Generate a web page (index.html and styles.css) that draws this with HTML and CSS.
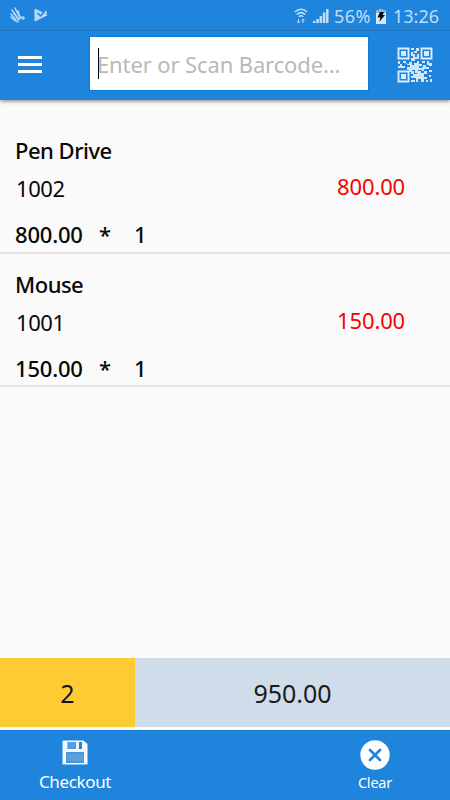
FILE: index.html
```html
<!DOCTYPE html>
<html lang="en">
<head>
<meta charset="utf-8">
<title>Checkout</title>
<link rel="stylesheet" href="styles.css">
</head>
<body>
<div class="app">
  <div class="status">
    <svg class="hand" width="16" height="17" viewBox="0 0 16 17" fill="none" stroke="#b6d8f5" stroke-width="1.5" stroke-linecap="round"><path d="M1 7l5 6M2 3l6 9M5 1l5 10M8 4l2 6M1 10l3 3 4 2" /><path d="M4 6l5 7M9 12l2-2"/><circle cx="13" cy="11" r="1" fill="#b6d8f5"/></svg>
    <svg class="play" width="14" height="14" viewBox="0 0 14 14"><path d="M1 1L13 7 1 13z" fill="#b6d8f5" stroke="#b6d8f5" stroke-linejoin="round"/><path d="M8 6.500L12.500 3.500" stroke="#b6d8f5" stroke-width="3"/><path d="M3.500 5l3 3L11 3" fill="none" stroke="#1e84dc" stroke-width="1.5"/></svg>
    <div class="right">
      <svg class="wifi" width="14" height="16" viewBox="0 0 14 16" fill="none" stroke="#c0ddf6" stroke-width="1.500"><path d="M.8 4Q7-1.500 13.200 4M2.700 6.500Q7 2.700 11.300 6.500M4.700 8.800Q7 6.800 9.300 8.800"/><path d="M4.500 11v4M3 13.500l1.500 1.500L6 13.500M9 15v-4M7.500 12.500L9 11l1.500 1.500" stroke-width="1"/></svg>
      <svg class="signal" width="16" height="16" viewBox="0 0 16 16" fill="#c0ddf6"><path d="M0 13h2.500v2H0zM3.300 11h2.500v4H3.300zM6.600 8h2.500v7H6.600zM9.900 4.500h2.500V15H9.900zM13 1h2.500v14H13z"/></svg>
      <span class="percent">56%</span>
      <svg class="battery" width="10" height="15" viewBox="0 0 10 15"><path d="M3 0h4v1.500h3V15H0V1.500h3z" fill="#d5e8f8"/><path d="M0 1.500h3V0h4v1.500h3V4H0z" fill="#83b9e7"/><path d="M4 3L8 3 6.500 6H9L3.300 13 4.500 8.500H1.500z" fill="#080b0d"/></svg>
      <span class="clock">13:26</span>
    </div>
  </div>
  <header class="toolbar">
    <div class="menu"><i></i><i></i><i></i></div>
    <div class="search"><span class="caret"></span><span class="hint">Enter or Scan Barcode...</span></div>
    <svg class="qr" width="36" height="36" viewBox="0 0 36 36">
      <g fill="none" stroke="#dbecfa" stroke-width="1.900"><path d="M1.500 1.500h10v10h-10zM24.500 1.500h10v10h-10zM1.500 24.500h10v10h-10z"/></g>
      <path fill="#dbecfa" d="M4 4h5v5H4zM27 4h5v5h-5zM4 27h5v5H4z"/>
      <path fill="#d1e6f8" d="M14 1h3v2h-3zM19 1h3v3h-2v2h-3V4h2zM14 5h2v2h2v3h2V7h2v5h-4v2h-4v-3h2V9h-2zM1 14h2v3h2v2h3v2H1v-2h2v-2H1zM6 14h3v3h3v-2h3v3h2v-2h3v-2h2v3h3v2h-3v2h3v2h-4v3h-3v-3h-3v2h-3v-2h-2v-3h3v-2h-3v-2H6zM25 14h3v2h-3zM30 14h2v2h3v3h-3v-1h-2zM26 18h3v2h3v2h-5v2h-2v-4h1zM32 23h3v2h-3zM14 24h3v3h3v2h-3v2h-3v-2h2v-2h-2zM21 24h3v2h3v-2h3v3h-3v3h3v2h-3v3h-3v-3h-3v3h-2v-4h-2v-2h3v-3h1zM14 33h4v2h-4zM32 28h2v2h-2zM29 33h2v2h-2zM33 32h2v3h-2z"/>
    </svg>
  </header>
  <main class="list">
    <section class="item">
      <div class="name">Pen Drive</div>
      <div class="line"><span class="code">1002</span><span class="amount">800.00</span></div>
      <div class="qty"><span class="price">800.00</span><span class="times">*</span><span>1</span></div>
    </section>
    <section class="item">
      <div class="name">Mouse</div>
      <div class="line"><span class="code">1001</span><span class="amount">150.00</span></div>
      <div class="qty"><span class="price">150.00</span><span class="times">*</span><span>1</span></div>
    </section>
  </main>
  <div class="totals"><div class="count">2</div><div class="sum">950.00</div></div>
  <footer class="actions">
    <div class="action checkout">
      <svg width="26" height="25" viewBox="0 0 26 25"><path d="M1 .5h20.500L25.500 4v20.500H.5V1z" fill="#f2f8fd"/><path d="M5.500 2h14.500v7H5.500z" fill="#2b82cc"/><path d="M6 2h8v7H6z" fill="#569ddd"/><path d="M14 2h3v7h-3z" fill="#e7f3fd"/><path d="M4 12h18v11H4z" fill="#4a96d8"/><path d="M5 14h16v7H5z" fill="#5aa0dd"/></svg>
      <span>Checkout</span>
    </div>
    <div class="action clear">
      <svg width="30" height="30" viewBox="0 0 30 30"><circle cx="15" cy="15" r="14.700" fill="#fff"/><path d="M10 10l10 10M20 10L10 20" stroke="#1e84dc" stroke-width="2.700" stroke-linecap="round"/></svg>
      <span>Clear</span>
    </div>
  </footer>
</div>
</body>
</html>
```
FILE: styles.css
```css
* { box-sizing: border-box; }
body { margin: 0; background: #fafafa; font-family: "Noto Sans", sans-serif; color: #080808; }
.app { width: 450px; height: 800px; display: flex; flex-direction: column; overflow: hidden; }
svg { display: block; flex: none; }
.status { height: 30px; background: #1e84dc; display: flex; align-items: flex-start; padding-left: 10px; color: #c0ddf6; flex: none; }
.hand { margin-top: 7px; }
.play { margin: 8px 0 0 8px; }
.right { margin-left: auto; display: flex; align-items: flex-start; padding-right: 11px; font-size: 18px; line-height: 32px; white-space: nowrap; }
.wifi { margin: 8px 5px 0 0; }
.signal { margin: 8px 5px 0 0; }
.percent { width: 38px; letter-spacing: 0.500px; }
.battery { margin: 9px 7px 0 4px; }
.clock { width: 46px; }
.toolbar { height: 70px; flex: none; background: #1e84dc; border-top: 1px solid #1b74c2; box-shadow: 0 1px 4px #777; display: flex; align-items: flex-start; position: relative; }
.menu { width: 24px; margin: 25px 48px 0 18px; display: flex; flex-direction: column; gap: 4px; }
.menu i { height: 3px; background: #fff; }
.search { width: 278px; height: 53px; margin-top: 6px; background: #fff; display: flex; align-items: center; padding-left: 8px; outline: 1px solid #087bdd; }
.caret { width: 1px; height: 31px; background: #000; }
.hint { font-size: 22px; line-height: 30px; letter-spacing: -0.120px; color: #b9b9b9; white-space: nowrap; margin-left: -2px; }
.qr { margin: 16px 0 0 29px; }
.list { flex: 1; padding-top: 20px; }
.item { height: 133.500px; padding: 15px 45px 0 15px; border-bottom: 2px solid #e4e4e4; font-size: 22px; line-height: 30px; }
.name { font-weight: 500; letter-spacing: -0.500px; }
.line { display: flex; justify-content: space-between; margin-top: 8px; }
.code { padding-left: 1px; letter-spacing: -0.400px; }
.amount { color: #f90000; margin-top: -2px; letter-spacing: -0.150px; }
.qty { display: flex; margin-top: 16px; font-weight: 500; letter-spacing: -0.200px; }
.price { width: 84px; }
.times { width: 35px; }
.totals { height: 69px; display: flex; flex: none; line-height: 71px; text-align: center; margin-bottom: 3px; font-size: 25px; }
.count { width: 135px; background: #fecc32; color: #111624; }
.sum { flex: 1; background: #cfdce9; color: #1b1b1b; }
.actions { height: 70px; background: #1e84dc; border-top: 1px solid #1879cd; display: flex; justify-content: space-between; flex: none; color: #fff; }
.action { display: flex; flex-direction: column; align-items: center; width: 150px; }
.checkout { padding-top: 9px; font-size: 17px; line-height: 33px; letter-spacing: -0.350px; }
.clear { padding-top: 9px; font-size: 14.500px; line-height: 25px; letter-spacing: -0.200px; }
```
